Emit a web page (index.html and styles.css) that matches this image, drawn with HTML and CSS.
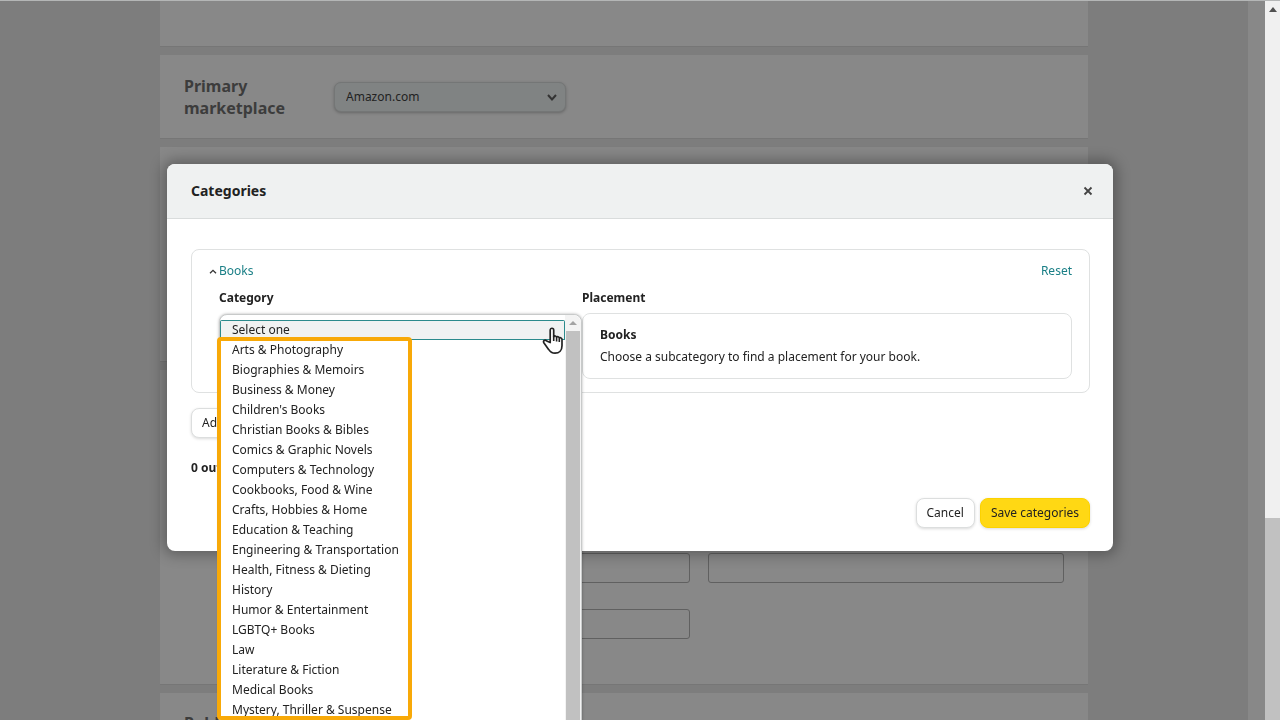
FILE: index.html
```html
<!DOCTYPE html>
<html lang="en">
<head>
  <meta charset="UTF-8">
  <meta name="viewport" content="width=device-width, initial-scale=1.0">
  <title>Categories</title>
  <link rel="stylesheet" href="styles.css">
</head>
<body>
  <div class="window">
    <main class="page">
      <section class="card card-previous"></section>
      <section class="card card-marketplace">
        <h2><label for="marketplace">Primary marketplace</label></h2>
        <div class="field">
          <select id="marketplace" class="marketplace">
            <option>Amazon.com</option>
          </select>
          <svg class="field-arrow" width="10" height="7" viewBox="0 0 10 7"><path d="M1 1l4 4.500L9 1" fill="none" stroke="#333" stroke-width="2"/></svg>
        </div>
      </section>
      <section class="card card-categories"></section>
      <section class="card card-keywords">
        <div class="keywords">
          <input type="text" aria-label="Keyword 1">
          <input type="text" aria-label="Keyword 2">
          <input type="text" aria-label="Keyword 3">
        </div>
      </section>
      <section class="card card-date">
        <h2>Publication date</h2>
      </section>
    </main>
    <div class="gutter"></div>
    <div class="scrollbar">
      <svg width="8" height="5" viewBox="0 0 8 5"><path d="M0 5l4-5 4 5z" fill="#505050"/></svg>
      <div class="scrollbar-thumb"></div>
    </div>
  </div>

  <div class="overlay">
    <div class="modal" role="dialog" aria-labelledby="modal-title">
      <header class="modal-header">
        <h1 id="modal-title">Categories</h1>
        <button class="close" type="button" aria-label="Close">
          <svg width="10" height="10" viewBox="0 0 10 10"><path d="M1.500 1.500l7 7M8.500 1.500l-7 7" stroke="#444" stroke-width="1.800"/></svg>
        </button>
      </header>
      <div class="modal-body">
        <div class="panel">
          <div class="panel-top">
            <a href="#" class="toggle">
              <svg width="8" height="5" viewBox="0 0 8 5"><path d="M1 4.300l3-3 3 3" fill="none" stroke="#333" stroke-width="1.300"/></svg>
              Books
            </a>
            <a href="#">Reset</a>
          </div>
          <div class="columns">
            <div class="category">
              <label for="category">Category</label>
              <div class="dropdown">
                <select id="category" class="options" size="20">
                  <option class="current">Select one</option>
                  <option>Arts &amp; Photography</option>
                  <option>Biographies &amp; Memoirs</option>
                  <option>Business &amp; Money</option>
                  <option>Children's Books</option>
                  <option>Christian Books &amp; Bibles</option>
                  <option>Comics &amp; Graphic Novels</option>
                  <option>Computers &amp; Technology</option>
                  <option>Cookbooks, Food &amp; Wine</option>
                  <option>Crafts, Hobbies &amp; Home</option>
                  <option>Education &amp; Teaching</option>
                  <option>Engineering &amp; Transportation</option>
                  <option>Health, Fitness &amp; Dieting</option>
                  <option>History</option>
                  <option>Humor &amp; Entertainment</option>
                  <option>LGBTQ+ Books</option>
                  <option>Law</option>
                  <option>Literature &amp; Fiction</option>
                  <option>Medical Books</option>
                  <option>Mystery, Thriller &amp; Suspense</option>
                </select>
                <div class="dropdown-scroll">
                  <svg width="8" height="4" viewBox="0 0 8 4"><path d="M0 4l4-4 4 4z" fill="#a3a3a3"/></svg>
                  <div class="dropdown-thumb"></div>
                </div>
                <div class="highlight"></div>
                <svg class="pointer" width="22" height="28" viewBox="0 0 22 28"><path d="M8.200 15.500V3.200c0-2.600 3.500-2.600 3.500 0v6.600c.6-1.300 2.700-1 2.900.5.700-1 2.500-.6 2.700.8.900-.8 2.700-.2 2.700 1.500v6.200c0 4.500-2.700 7.400-7 7.400-3.200 0-4.800-1.200-6.400-3.800L2 16c-1.400-2.400 1-3.700 2.700-2z" fill="#fff" stroke="#222" stroke-width="1.700" stroke-linejoin="round"/><path d="M11.700 9.500v4.500M14.600 10.500v4M17.300 11.500v3.500" stroke="#222" stroke-width="1.600"/></svg>
              </div>
            </div>
            <div class="placement">
              <h3>Placement</h3>
              <div class="placement-box">
                <h4>Books</h4>
                <p>Choose a subcategory to find a placement for your book.</p>
              </div>
            </div>
          </div>
        </div>
        <button class="btn" type="button">Add another category</button>
        <p class="count">0 out of 3 selected</p>
        <div class="actions">
          <button class="btn" type="button">Cancel</button>
          <button class="btn btn-primary" type="button">Save categories</button>
        </div>
      </div>
    </div>
  </div>
</body>
</html>
```
FILE: styles.css
```css
* { box-sizing: border-box; }
body {
  margin: 0;
  height: 100vh;
  overflow: hidden;
  font-family: "Noto Sans", sans-serif;
  font-size: 12px;
  line-height: 20px;
  color: #222;
}
h1, h2, h3, h4, p { margin: 0; }
button, input, select {
  font: inherit;
  color: inherit;
}
a {
  color: #1a7f86;
  text-decoration: none;
}

/* dimmed page */
.window {
  display: flex;
  height: 100vh;
  background: #7d7d7d;
  border-top: 1px solid #b4b6b6;
}
.page {
  flex: 1;
  display: flex;
  flex-direction: column;
  align-items: center;
  gap: 8px;
  overflow: hidden;
}
.card {
  display: flex;
  flex-shrink: 0;
  width: 928px;
  max-width: 100%;
  padding: 0 24px;
  background: #888;
  border-bottom: 1px solid #767676;
}
.card h2 {
  width: 150px;
  font-size: 16px;
  line-height: 22px;
  color: #3c3c3c;
}
.card-previous { height: 46px; }
.card-marketplace {
  height: 84px;
  align-items: center;
}
.card-categories { height: 215px; }
.card-keywords {
  height: 315px;
  padding-top: 183px;
}
.card-date {
  height: 84px;
  padding-top: 19px;
}
.field {
  position: relative;
  width: 232px;
}
.marketplace {
  display: block;
  width: 100%;
  height: 30px;
  padding: 0 11px;
  appearance: none;
  background: #808383;
  border: 1px solid #747676;
  border-radius: 7px;
  box-shadow: 0 1px 3px rgba(0, 0, 0, 0.25);
}
.field-arrow {
  position: absolute;
  right: 9px;
  top: 12px;
}
.keywords {
  flex: 1;
  display: grid;
  grid-template-columns: 1fr 1fr;
  grid-auto-rows: 30px;
  align-content: start;
  gap: 26px 18px;
  margin-left: 149px;
}
.keywords input {
  min-width: 0;
  background: transparent;
  border: 1px solid #606060;
  border-radius: 3px;
}
.gutter {
  width: 17px;
  background: #888;
}
.scrollbar {
  display: flex;
  flex-direction: column;
  align-items: center;
  justify-content: space-between;
  width: 15px;
  padding-top: 6px;
  background: #f0f0f0;
}
.scrollbar-thumb {
  width: 100%;
  height: 28vh;
  background: #c1c1c1;
}

/* dialog */
.overlay {
  position: fixed;
  inset: 0;
  display: flex;
  justify-content: center;
  align-items: flex-start;
  padding-top: 164px;
}
.modal {
  width: 946px;
  max-width: 100%;
  background: #fff;
  border-radius: 8px;
  box-shadow: 0 0 14px 4px rgba(0, 0, 0, 0.3);
}
.modal-header {
  display: flex;
  justify-content: space-between;
  align-items: center;
  height: 55px;
  padding: 0 20px 0 24px;
  background: #eff1f1;
  border-bottom: 1px solid #d9dcdc;
  border-radius: 8px 8px 0 0;
}
.modal-header h1 {
  font-size: 14px;
}
.close {
  display: flex;
  padding: 0;
  background: none;
  border: none;
}
.modal-body {
  padding: 30px 23px 23px 24px;
}
.panel {
  height: 144px;
  margin-bottom: 15px;
  padding: 11px 17px 0;
  border: 1px solid #dfe1e1;
  border-radius: 8px;
}
.panel-top {
  display: flex;
  justify-content: space-between;
}
.toggle {
  display: flex;
  align-items: center;
  gap: 2px;
}
.columns {
  display: grid;
  grid-template-columns: 363px 1fr;
  margin: 7px 0 0 10px;
}
.category label, .placement h3 {
  display: block;
  font-size: 12px;
  font-weight: bold;
}
.placement-box {
  height: 66px;
  margin-top: 5px;
  padding: 11px 17px;
  border: 1px solid #dfe1e1;
  border-radius: 8px;
}
.placement-box h4 {
  margin-bottom: 2px;
  font-size: 12px;
}
.category { position: relative; }
.dropdown {
  position: absolute;
  top: 26px;
  left: 0;
  width: 100%;
  height: 440px;
  display: flex;
  background: #fff;
  border: 1px solid #c8caca;
  border-radius: 8px;
  box-shadow: 0 0 3px rgba(0, 0, 0, 0.3);
}
.options {
  flex: 1;
  margin-top: 5px;
  padding: 0;
  overflow: hidden;
  background: transparent;
  border: none;
  outline: none;
}
.options option {
  min-height: 20px;
  padding: 1px 12px;
  line-height: 18px;
}
.options .current {
  padding: 0 11px;
  background: #f0f2f2;
  border: 1px solid #2b8a8c;
}
.dropdown-scroll {
  display: flex;
  flex-direction: column;
  align-items: center;
  width: 16px;
  padding-top: 6px;
  background: #f3f3f3;
  border-radius: 0 8px 0 0;
}
.dropdown-thumb {
  flex: 1;
  width: 14px;
  margin-top: 6px;
  background: #c1c1c1;
}
.highlight {
  position: absolute;
  top: 22px;
  left: -3px;
  width: 195px;
  height: 383px;
  border: 4px solid #f8a908;
  border-radius: 4px;
}
.pointer {
  position: absolute;
  top: 12px;
  right: 17px;
}
.btn {
  height: 30px;
  padding: 0 10px;
  background: #fff;
  border: 1px solid #dcdede;
  border-radius: 8px;
  box-shadow: 0 1px 3px rgba(0, 0, 0, 0.15);
}
.btn-primary {
  background: #ffd814;
  border-color: #fcd200;
}
.count {
  margin-top: 20px;
  font-weight: bold;
}
.actions {
  display: flex;
  justify-content: flex-end;
  gap: 5px;
  margin-top: 20px;
}
```
